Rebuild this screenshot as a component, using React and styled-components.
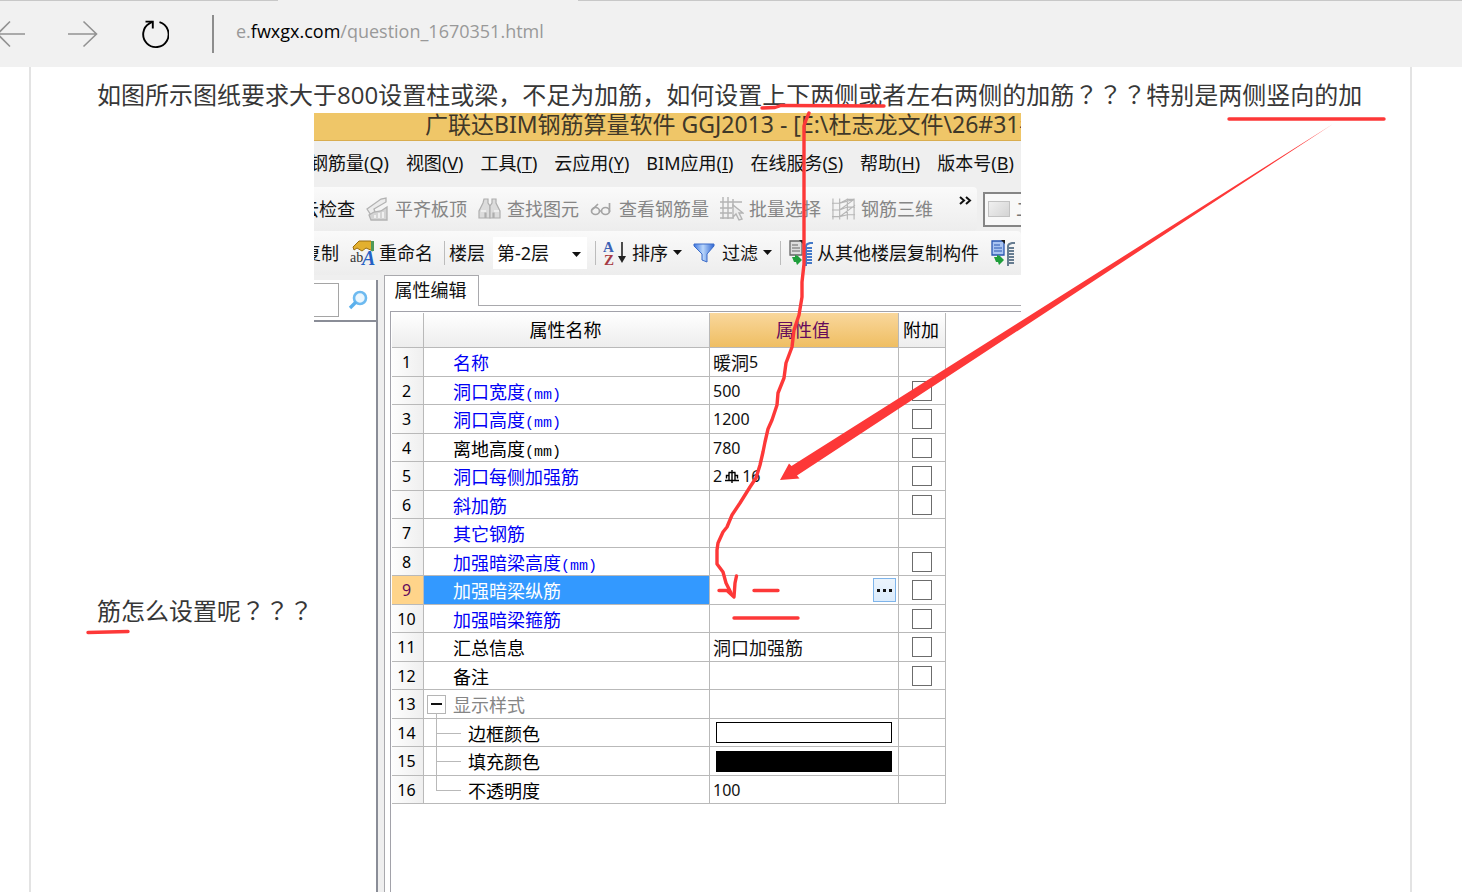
import React from 'react';
import styled, { createGlobalStyle, css } from 'styled-components';

const ink = '#373737';
const red = '#fd3838';
const grid = '#b9b9b9';
const blue = '#0000f5';
const plum = '#650a5c';
const uiFont = `'Noto Sans', 'Noto Sans CJK SC', sans-serif`;
const cjkFont = `'Noto Sans CJK SC', sans-serif`;

const rows = [
  { name: '名称', value: '暖洞', number: '5', color: blue },
  { name: '洞口宽度', unit: '(mm)', number: '500', color: blue, extra: true },
  { name: '洞口高度', unit: '(mm)', number: '1200', color: blue, extra: true },
  { name: '离地高度', unit: '(mm)', number: '780', extra: true },
  { name: '洞口每侧加强筋', rebar: ['2', '16'], color: blue, extra: true },
  { name: '斜加筋', color: blue, extra: true },
  { name: '其它钢筋', color: blue },
  { name: '加强暗梁高度', unit: '(mm)', color: blue, extra: true },
  { name: '加强暗梁纵筋', selected: true, extra: true },
  { name: '加强暗梁箍筋', color: blue, extra: true },
  { name: '汇总信息', value: '洞口加强筋', extra: true },
  { name: '备注', extra: true },
  { name: '显示样式', color: '#858585', group: true },
  { name: '边框颜色', child: true, swatch: '#ffffff' },
  { name: '填充颜色', child: true, swatch: '#000000' },
  { name: '不透明度', child: true, last: true, number: '100' }
];

const menus = [
  ['钢筋量', 'Q'],
  ['视图', 'V'],
  ['工具', 'T'],
  ['云应用', 'Y'],
  ['BIM应用', 'I'],
  ['在线服务', 'S'],
  ['帮助', 'H'],
  ['版本号', 'B']
];

/* Icons */

const BackIcon = () => (
  <svg width="30" height="28" viewBox="0 0 30 28" fill="none" stroke="#929292" strokeWidth="1.6">
    <path d="M30 14H3M15 1.5 2.5 14 15 26.5" />
  </svg>
);

const ForwardIcon = () => (
  <svg width="30" height="28" viewBox="0 0 30 28" fill="none" stroke="#929292" strokeWidth="1.6">
    <path d="M0 14h28M15.5 1.5 28.5 14 15.5 26.5" />
  </svg>
);

const ReloadIcon = () => (
  <svg width="28" height="30" viewBox="0 0 28 30" fill="none" stroke="#000" strokeWidth="1.9">
    <path d="M18.5 3.2A12.700 12.700 0 1 1 8.500 4.400L11.500 2.600" />
    <path d="M4.5 2.6H11.8V9.5" />
  </svg>
);

const AlignIcon = () => (
  <svg width="24" height="24" viewBox="0 0 24 24" fill="#ececec" stroke="#b2b2b2" strokeWidth="1.3">
    <path d="M1 12 15 2l5-1v4L8 12l1 3-4 3z" />
    <path d="M3 18l2 5h16V10l-6 4-7 1z" fill="#d4d4d4" />
    <path d="M9 18v3M13 16v5M17 15v6" stroke="#fff" />
  </svg>
);

const BinocularsIcon = () => (
  <svg width="24" height="24" viewBox="0 0 24 24" fill="#dcdcdc" stroke="#aeaeae" strokeWidth="1.2">
    <path d="M6 2h4v4l2 3v12H8v-5H7v5H1v-7l4-8z" />
    <path d="M14 2h4v4l4 8v7h-6v-5h-1v5h-3V9l2-3z" />
    <path d="M3 14h5M16 14h5" stroke="#fff" />
  </svg>
);

const GlassesIcon = () => (
  <svg width="24" height="24" viewBox="0 0 24 24" fill="none" stroke="#a4a4a4" strokeWidth="1.7">
    <ellipse cx="5.5" cy="14" rx="4" ry="3.5" />
    <ellipse cx="15.5" cy="14" rx="4" ry="3.5" />
    <path d="M2 13 8 7M9.5 14h2M19.5 15V6" />
  </svg>
);

const PickIcon = () => (
  <svg width="24" height="24" viewBox="0 0 24 24" fill="none" stroke="#b4b4b4" strokeWidth="1.4">
    <path d="M3 0v22M8 0v22M0 5h22M0 11h12M0 16h12M0 21h14M13 2v9" />
    <path d="M13 8v12l3-3 3 6 3-1-3-6h4z" fill="#ededed" />
  </svg>
);

const CageIcon = () => (
  <svg width="24" height="24" viewBox="1 0 25 24" fill="none" stroke="#b6b6b6" strokeWidth="1.2">
    <path d="M2 1v22M9 1v22M17 1v22M24 1v22M0 6h9l8-4h7M0 13h9l8-3h8M0 20h9l8-2h8M9 6l15-4M9 13 24 2M9 20 25 8" />
  </svg>
);

const RenameIcon = () => (
  <svg width="26" height="26" viewBox="0 0 26 26">
    <path d="M3 7 9 1h12l2 2v8l-7-3-4 3-5-3-3 2z" fill="#e3b02f" stroke="#9a6d12" />
    <path d="M21 1h3v10h-3z" fill="#4f9a5b" />
    <text x="0" y="22" fontSize="14" fontFamily="Liberation Serif, serif" fill="#333">ab</text>
    <text x="12" y="25" fontSize="20" fontWeight="bold" fontStyle="italic" fontFamily="Liberation Serif, serif" fill="#2460c4">A</text>
  </svg>
);

const SortIcon = () => (
  <svg width="24" height="26" viewBox="0 0 24 26">
    <text x="0" y="12" fontSize="15" fontWeight="bold" fontFamily="Liberation Serif, serif" fill="#3c62b4">A</text>
    <text x="1" y="25" fontSize="15" fontWeight="bold" fontFamily="Liberation Serif, serif" fill="#a63a44">Z</text>
    <path d="M19 2v18" stroke="#222" strokeWidth="1.6" />
    <path d="M15 16h8l-4 7z" fill="#222" />
  </svg>
);

const FilterIcon = () => (
  <svg width="24" height="24" viewBox="0 0 24 24">
    <defs>
      <linearGradient id="funnel" x1="0" x2="1">
        <stop offset="0" stopColor="#3f78e0" />
        <stop offset=".45" stopColor="#b9d6fb" />
        <stop offset="1" stopColor="#2f66d2" />
      </linearGradient>
    </defs>
    <path d="M1 3h20v2l-7 8v8l-5-2v-6L1 5z" fill="url(#funnel)" stroke="#3a6bc8" />
  </svg>
);

const CopyFloorIcon = ({ page = '#dedede', edge = '#666', coil = '#4479c8' }) => (
  <svg width="26" height="26" viewBox="0 0 26 26">
    <path d="M2 1h12v14H2z" fill={page} stroke={edge} strokeWidth="1.3" />
    <path d="M11 0h4v4z" fill="#222" />
    <path d="M4 5h6M4 8h8M4 11h8" stroke={edge} />
    <path d="M4 17h3v-2l3 1 4 4-5 5-1-3H6z" fill="#1f9e3b" />
    <path d="M18 26V6q0-2 4-3h3M18 8h6M18 11h6M18 14h6M18 17h6M18 20h6M18 23h6" fill="none" stroke={coil} strokeWidth="2" />
  </svg>
);

const SearchIcon = () => (
  <svg width="22" height="22" viewBox="0 0 22 22" fill="none">
    <circle cx="13" cy="9" r="6" fill="#eaf6fe" stroke="#6dbaf0" strokeWidth="2.6" />
    <path d="M9 13 3 19" stroke="#5bb0ec" strokeWidth="3.4" />
  </svg>
);

const Caret = () => (
  <svg width="9" height="5" viewBox="0 0 9 5">
    <path d="M0 0h9L4.5 5z" fill="#111" />
  </svg>
);

const MoreIcon = () => (
  <svg width="13" height="9" viewBox="0 0 13 9" fill="none" stroke="#111" strokeWidth="2">
    <path d="M1 1l4 3.5L1 8M7 1l4 3.5L7 8" />
  </svg>
);

const RebarIcon = () => (
  <svg width="14" height="14" viewBox="0 0 14 14" fill="none" stroke="#000" strokeWidth="1.4">
    <path d="M7 1v13M4 3.5v8M10 3.5v8M3.500 3.500h7M4 6.500H1.500v3M10 6.500h2.500v3M0 11.500h14" />
  </svg>
);

const Marks = () => (
  <MarkLayer width="1462" height="892" viewBox="0 0 1462 892" aria-hidden="true">
    <path d="M762 108 775 107.5 781 105.5 884 106" />
    <path d="M1229 119H1384" />
    <path d="M88 632.5 128 631.5" />
    <path d="M809 113 806 120 804 126V264L802 282V297L799 315 794 330 792 347 786 363 784 378 778 393 777 405 772 420 768 429 765 442 763 452 760 465 756 478 750 487 740 503 732 515 727 527 723 532 718 543 717 550V564L723 572 726 583 731 593" />
    <path d="M719 590.5H727L734 597 735 583 736.5 576" />
    <path d="M754 590.5H778M734 618H798" />
    <path d="M780 480 789 463.5 791.5 466 1333 124 797 475.5 799.5 478.5z" fill={red} stroke="none" />
  </MarkLayer>
);

/* Page */

const Tool = ({ icon, label, caret, ...rest }) => (
  <ToolButton type="button" {...rest}>
    {icon && <IconBox>{icon}</IconBox>}
    {label && <span>{label}</span>}
    {caret && <Caret />}
  </ToolButton>
);

const PropertyRow = ({ row, index }) => (
  <tr>
    <NumberCell scope="row" $active={row.selected}>{index + 1}</NumberCell>
    <NameCell $color={row.color} $selected={row.selected}>
      <NameLine>
        <TreeSlot>
          {row.group && <Fold type="button" aria-label="−" />}
          {row.child && <Branch $last={row.last} />}
        </TreeSlot>
        <Name $child={row.child}>
          {row.name}
          {row.unit && <Unit>{row.unit}</Unit>}
        </Name>
      </NameLine>
    </NameCell>
    <ValueCell>
      <ValueLine>
        {row.value}
        {row.number && <Digits>{row.number}</Digits>}
        {row.rebar && (
          <Digits>
            {row.rebar[0]}
            <RebarIcon />
            {row.rebar[1]}
          </Digits>
        )}
        {row.swatch && <Swatch $color={row.swatch} />}
        {row.selected && (
          <Dots type="button" aria-label="...">
            <i />
            <i />
            <i />
          </Dots>
        )}
      </ValueLine>
    </ValueCell>
    <ExtraCell>{row.extra && <Check type="checkbox" aria-label={row.name} />}</ExtraCell>
  </tr>
);

const App = () => {
  return (
    <Browser>
      <GlobalStyle />
      <AddressBar>
        <NavButton type="button" aria-label="Back" $first>
          <BackIcon />
        </NavButton>
        <NavButton type="button" aria-label="Forward">
          <ForwardIcon />
        </NavButton>
        <NavButton type="button" aria-label="Refresh">
          <ReloadIcon />
        </NavButton>
        <Address>
          e.<b>fwxgx.com</b>/question_1670351.html
        </Address>
      </AddressBar>
      <Article>
        <Line>
          如图所示图纸要求大于800设置柱或梁，不足为加筋，如何设置上下两侧或者左右两侧的加筋
          <Query>？？？</Query>特别是两侧竖向的加
        </Line>
        <LineWithFigure>
          <span>
            筋怎么设置呢<Query>？？？</Query>
          </span>
          <Software>
            <TitleBar>广联达BIM钢筋算量软件 GGJ2013 - [E:\杜志龙文件\26#31#</TitleBar>
            <MenuBar>
              {menus.map(([label, key]) => (
                <MenuButton type="button" key={key}>
                  {label}(<u>{key}</u>)
                </MenuButton>
              ))}
            </MenuBar>
            <ToolRow>
              <ToolBar $cut={13}>
                <Tool label="云检查" />
                <Tool disabled icon={<AlignIcon />} label="平齐板顶" />
                <Tool disabled icon={<BinocularsIcon />} label="查找图元" />
                <Tool disabled icon={<GlassesIcon />} label="查看钢筋量" />
                <Tool disabled icon={<PickIcon />} label="批量选择" />
                <Tool disabled icon={<CageIcon />} label="钢筋三维" />
                <More type="button" aria-label="»">
                  <MoreIcon />
                </More>
              </ToolBar>
              <ViewBox>
                <ViewKey />
                二维
              </ViewBox>
            </ToolRow>
            <ToolRow>
              <ToolBar $cut={11} $wide>
                <Tool label="复制" />
                <Tool icon={<RenameIcon />} label="重命名" />
                <Group>
                  <label htmlFor="floor">楼层</label>
                  <Combo>
                    <select id="floor" defaultValue="-2">
                      <option value="-2">第-2层</option>
                    </select>
                    <Caret />
                  </Combo>
                </Group>
                <Group $spaced>
                  <Tool icon={<SortIcon />} label="排序" caret />
                  <Tool icon={<FilterIcon />} label="过滤" caret />
                </Group>
                <Group $spaced>
                  <Tool icon={<CopyFloorIcon />} label="从其他楼层复制构件" />
                  <Tool
                    aria-label="复制构件"
                    icon={<CopyFloorIcon page="#a9c4f2" edge="#2a56b0" coil="#667c90" />}
                  />
                </Group>
              </ToolBar>
            </ToolRow>
            <Workspace>
              <SidePane>
                <SearchRow>
                  <SearchInput type="text" aria-label="搜索" />
                  <SearchButton type="button" aria-label="搜索">
                    <SearchIcon />
                  </SearchButton>
                </SearchRow>
              </SidePane>
              <Splitter />
              <MainPane>
                <TabStrip>
                  <Tab type="button">属性编辑</Tab>
                </TabStrip>
                <Frame>
                  <Table>
                    <colgroup>
                      <col width="32" />
                      <col width="286" />
                      <col width="189" />
                      <col width="47" />
                    </colgroup>
                    <thead>
                      <tr>
                        <HeadCell />
                        <HeadCell>属性名称</HeadCell>
                        <HeadCell $active>属性值</HeadCell>
                        <HeadCell>附加</HeadCell>
                      </tr>
                    </thead>
                    <tbody>
                      {rows.map((row, index) => (
                        <PropertyRow key={row.name} row={row} index={index} />
                      ))}
                    </tbody>
                  </Table>
                </Frame>
              </MainPane>
            </Workspace>
          </Software>
        </LineWithFigure>
      </Article>
      <Marks />
    </Browser>
  );
};

export default App;

const GlobalStyle = createGlobalStyle`
  * {
    box-sizing: border-box;
  }

  body {
    margin: 0;
    background: #fff;
    font-family: ${uiFont};
  }

  button, input, select {
    font: inherit;
    color: inherit;
    margin: 0;
    padding: 0;
    border: none;
    background: none;
  }

  svg {
    display: block;
    flex: none;
  }
`;

const Browser = styled.div`
  position: relative;
  height: 100vh;
  overflow: hidden;
  display: flex;
  flex-direction: column;
`;

const AddressBar = styled.header`
  flex: none;
  height: 67px;
  display: flex;
  align-items: center;
  gap: 43px;
  background:
    linear-gradient(#c8c8c8, #c8c8c8) 0 0 / 278px 1px no-repeat,
    linear-gradient(#c8c8c8, #c8c8c8) 578px 0 / 100% 1px no-repeat,
    #f1f1f1;
`;

const NavButton = styled.button`
  margin-left: ${(props) => (props.$first ? '-5px' : '0')};
`;

const Address = styled.div`
  height: 38px;
  padding-left: 22px;
  border-left: 2px solid #8d8d8d;
  font-family: 'Open Sans', ${uiFont};
  font-size: 18px;
  line-height: 32px;
  color: #999;

  b {
    font-weight: 400;
    color: #000;
  }
`;

const Article = styled.main`
  flex: 1;
  min-height: 0;
  margin: 0 50px 0 29px;
  padding: 10px 36px 0 66px;
  border: solid #e3e3e3;
  border-width: 0 2px;
  font-family: 'Open Sans', ${cjkFont};
  font-size: 24px;
  line-height: 34px;
  color: ${ink};
  white-space: nowrap;
`;

const Line = styled.p`
  height: 36px;
  margin: 0;
`;

/* centred full-width question marks */
const Query = styled.span`
  font-family: 'Noto Sans CJK TC', sans-serif;
`;

const LineWithFigure = styled.div`
  display: flex;
  align-items: center;
`;

const Software = styled.section`
  flex: 0 1 707px;
  min-width: 0;
  min-height: 994px;
  margin-left: 1px;
  display: flex;
  flex-direction: column;
  overflow: hidden;
  background: #efefef;
  color: #111;
  font-family: ${uiFont};
  font-size: 18px;
  line-height: 24px;
`;

const TitleBar = styled.div`
  height: 28px;
  padding-left: 111px;
  background: #efc668;
  border-bottom: 1px solid #d9ad50;
  font-size: 23px;
  line-height: 22px;
  color: #3f3828;
`;

const MenuBar = styled.nav`
  height: 46px;
  margin-left: -4px;
  padding-bottom: 2px;
  display: flex;
  align-items: center;
  gap: 17px;
`;

const MenuButton = styled.button`
  flex: none;

  u {
    text-underline-offset: 2px;
  }
`;

const ToolRow = styled.div`
  height: 44px;
  flex: none;
  display: flex;
  align-items: center;
  gap: 6px;
`;

const ToolBar = styled.div`
  height: 100%;
  flex: none;
  width: ${(props) => (props.$wide ? '100%' : 'auto')};
  padding: 0 5px 1px 0;
  display: flex;
  align-items: center;
  gap: 11px;
  background: linear-gradient(#fafafa, #ededed);
  border-radius: 0 4px 4px 0;

  > :first-child {
    margin-left: ${(props) => -props.$cut}px;
  }
`;

const ToolButton = styled.button`
  flex: none;
  display: flex;
  align-items: center;
  gap: 5px;

  &:disabled {
    color: #868686;
  }
`;

const IconBox = styled.span`
  width: 24px;
  display: flex;
`;

const More = styled.button`
  margin-left: 15px;
  padding-bottom: 16px;
`;

const ViewBox = styled.div`
  flex: none;
  height: 35px;
  width: 80px;
  padding-left: 3px;
  display: flex;
  align-items: center;
  gap: 6px;
  border: 2px solid #858585;
  background: #f8f8f8;
  color: #777;
`;

const ViewKey = styled.i`
  width: 22px;
  height: 16px;
  border: 1px solid #c2c2c2;
  background: linear-gradient(135deg, #f0f0f0, #d4d4d4);
`;

const Group = styled.div`
  flex: none;
  height: 24px;
  padding-left: ${(props) => (props.$spaced ? '7px' : '4px')};
  margin-left: ${(props) => (props.$spaced ? '-3px' : '0')};
  display: flex;
  align-items: center;
  gap: ${(props) => (props.$spaced ? '11px' : '8px')};
  border-left: 1px solid #bcbcbc;
`;

const Combo = styled.span`
  position: relative;

  select {
    appearance: none;
    width: 94px;
    height: 32px;
    padding-left: 4px;
    background: #fff;
  }

  svg {
    position: absolute;
    right: 6px;
    top: 15px;
  }
`;

const Workspace = styled.div`
  flex: 1;
  display: flex;
`;

const SidePane = styled.aside`
  flex: none;
  width: 64px;
  margin-top: 5px;
  border-right: 2px solid #8a8d97;
  background: #fff;
`;

const SearchRow = styled.div`
  height: 42px;
  padding: 3px 0;
  display: flex;
  border-bottom: 2px solid #8a8d97;
`;

const SearchInput = styled.input`
  width: 25px;
  border: 1px solid #a5a5a5;
  border-left: none;
  background: #fff;
`;

const SearchButton = styled.button`
  flex: 1;
  display: flex;
  align-items: center;
  justify-content: center;
`;

const Splitter = styled.div`
  flex: none;
  width: 6px;
`;

const MainPane = styled.div`
  flex: 1;
  min-width: 0;
  display: flex;
  flex-direction: column;
  background: #fff;
  border-left: 1px solid #a9a9ad;
`;

const TabStrip = styled.div`
  height: 31px;
  display: flex;

  &::after {
    content: '';
    flex: 1;
    border-bottom: 1px solid #a9a9ad;
  }
`;

const Tab = styled.button`
  width: 94px;
  padding: 0 2px 4px 0;
  border: solid #a9a9ad;
  border-width: 1px 1px 0 0;
  font-family: ${cjkFont};
`;

const Frame = styled.div`
  flex: 1;
  margin: 5px 0 0 5px;
  padding: 1px 0 0 1px;
  border: solid #a2a2aa;
  border-width: 1px 0 0 1px;
`;

const Table = styled.table`
  width: 554px;
  table-layout: fixed;
  border-collapse: separate;
  border-spacing: 0;
  font-size: 18px;
  line-height: 24px;

  tbody tr {
    height: 29px;
  }

  tbody tr:nth-child(even) {
    height: 28px;
  }
`;

const cell = css`
  padding: 0;
  border: solid ${grid};
  border-width: 0 1px 1px 0;
  font-weight: 400;
`;

const HeadCell = styled.th`
  ${cell}
  height: 35px;
  padding-right: 2px;
  color: ${(props) => (props.$active ? plum : '#000')};
  background: ${(props) =>
    props.$active ? 'linear-gradient(#f9d79c, #efbe62)' : 'linear-gradient(#fff, #ededed)'};
`;

const NumberCell = styled.th`
  ${cell}
  padding-right: 2px;
  font-size: 16px;
  color: ${(props) => (props.$active ? plum : '#000')};
  background: ${(props) => (props.$active ? '#ffd48a' : 'linear-gradient(90deg, #fdfdfd, #efefef)')};
`;

const NameCell = styled.td`
  ${cell}
  color: ${(props) => (props.$selected ? '#fff' : props.$color || '#000')};
  background: ${(props) => (props.$selected ? '#3399ff' : '#fff')};
`;

const NameLine = styled.div`
  display: flex;
  align-items: center;
  height: 27px;
`;

const TreeSlot = styled.span`
  flex: none;
  width: 29px;
  height: 28px;
  padding-left: 3px;
  display: flex;
  align-items: center;
`;

const Fold = styled.button`
  width: 19px;
  height: 19px;
  display: flex;
  align-items: center;
  justify-content: center;
  border: 1px solid #b5b5b5;
  background: #fff;

  &::after {
    content: '';
    width: 11px;
    height: 2px;
    background: #111;
  }
`;

const Branch = styled.i`
  position: relative;
  width: 26px;
  height: 100%;
  margin-left: 9px;

  &::before {
    content: '';
    position: absolute;
    left: 0;
    top: -6px;
    height: ${(props) => (props.$last ? '20px' : '35px')};
    border-left: 1px solid ${grid};
  }

  &::after {
    content: '';
    position: absolute;
    left: 0;
    top: 14px;
    width: 25px;
    border-top: 1px solid ${grid};
  }
`;

const Name = styled.span`
  height: 24px;
  display: flex;
  align-items: baseline;
  padding-left: ${(props) => (props.$child ? '15px' : '0')};
  font-family: ${cjkFont};
`;

const Unit = styled.span`
  font-family: 'Liberation Mono', monospace;
  font-size: 15px;
  line-height: 16px;
`;

const ValueCell = styled.td`
  ${cell}
  background: #fff;
`;

const ValueLine = styled.div`
  height: 27px;
  padding: 0 2px 0 3px;
  display: flex;
  align-items: center;
  font-family: ${cjkFont};
`;

const Digits = styled.span`
  display: flex;
  align-items: center;
  gap: 3px;
  font-family: ${uiFont};
  font-size: 16px;
`;

const Swatch = styled.span`
  flex: 1;
  height: 21px;
  margin: 0 4px 0 3px;
  border: 1px solid #000;
  background: ${(props) => props.$color};
`;

const Dots = styled.button`
  width: 23px;
  height: 24px;
  margin-left: auto;
  display: flex;
  align-items: center;
  justify-content: center;
  gap: 3px;
  border: 1px solid #7eb4ea;
  background: linear-gradient(#ecf4fc, #dcecfc);

  i {
    width: 3px;
    height: 3px;
    background: #111;
  }
`;

const ExtraCell = styled.td`
  ${cell}
  background: #fff;
  line-height: 0;
  text-align: center;
`;

const Check = styled.input`
  appearance: none;
  width: 20px;
  height: 20px;
  border: 1px solid #6c6c6c;
  background: #fff;

  &:checked {
    background: #3399ff;
  }
`;

const MarkLayer = styled.svg`
  position: absolute;
  top: 0;
  left: 0;
  pointer-events: none;
  fill: none;
  stroke: ${red};
  stroke-width: 3.4;
  stroke-linecap: round;
  stroke-linejoin: round;
`;
